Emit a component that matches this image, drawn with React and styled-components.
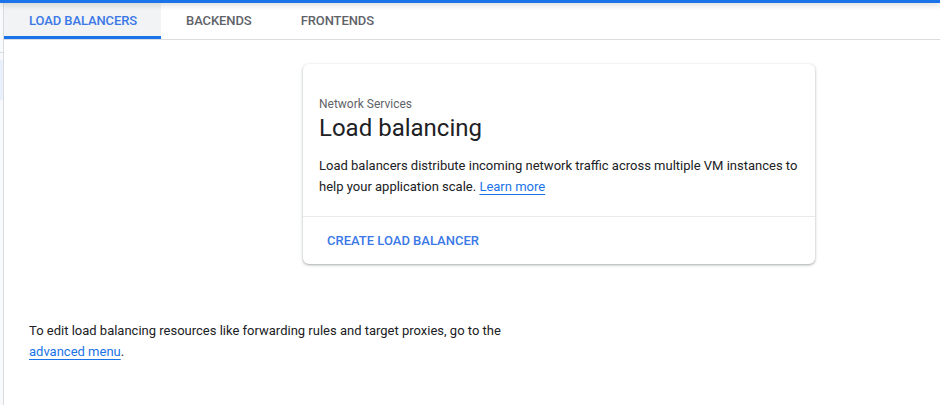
import React from 'react'
import styled, { createGlobalStyle } from 'styled-components'

const Global = createGlobalStyle`
  html, body {
    margin: 0;
    padding: 0;
    background: #fff;
    font-family: Roboto, "Liberation Sans", Arial, sans-serif;
    color: #202124;
  }
`

const Page = styled.div`
  display: flex;
  flex-direction: column;
  width: 940px;
  height: 405px;
  overflow: hidden;
`

const TopBar = styled.div`
  height: 3px;
  background: #1a73e8;
  box-shadow: 0 1px 6px rgba(60, 64, 67, 0.35);
  position: relative;
  z-index: 2;
  flex-shrink: 0;
`

const Body = styled.div`
  display: flex;
  flex: 1;
`

const SideSliver = styled.div`
  width: 3px;
  border-right: 1px solid #dadce0;
  background: #f8f9fa;
  display: flex;
  flex-direction: column;
  flex-shrink: 0;
`

const SliverLine = styled.div`
  margin-top: 49px;
  height: 1px;
  background: #dadce0;
`

const SliverActive = styled.div`
  margin-top: 7px;
  height: 40px;
  background: #e8f0fe;
`

const Main = styled.div`
  flex: 1;
  display: flex;
  flex-direction: column;
`

const Tabs = styled.div`
  display: flex;
  height: 36px;
  border-bottom: 1px solid #dadce0;
`

const Tab = styled.div`
  display: flex;
  align-items: center;
  padding: 2px 24px 0 25px;
  font-size: 13px;
  font-weight: 500;
  letter-spacing: -0.1px;
  text-transform: uppercase;
  color: ${p => (p.$active ? '#3b78e7' : '#5f6368')};
  background: ${p => (p.$active ? '#f1f3f4' : 'transparent')};
  border-bottom: 3px solid ${p => (p.$active ? '#1a73e8' : 'transparent')};
`

const Content = styled.div`
  display: flex;
  flex-direction: column;
  padding: 24px 0 0 25px;
`

const CardRow = styled.div`
  display: flex;
  padding-left: 274px;
`

const Card = styled.div`
  width: 512px;
  border-radius: 6px;
  background: #fff;
  box-shadow: 0 1px 2px rgba(60, 64, 67, 0.3), 0 1px 3px 1px rgba(60, 64, 67, 0.12);
`

const CardBody = styled.div`
  padding: 32px 16px 19px 16px;
  border-bottom: 1px solid #e8eaed;
`

const Eyebrow = styled.div`
  font-size: 12px;
  line-height: 16px;
  color: #5f6368;
`

const Title = styled.h1`
  margin: 0;
  font-size: 24px;
  font-weight: 400;
  line-height: 32px;
  color: #202124;
`

const Desc = styled.p`
  margin: 11px 0 0 0;
  font-size: 13px;
  line-height: 21px;
  color: #202124;
`

const Link = styled.a`
  color: #1a73e8;
  text-decoration: underline;
  text-underline-offset: 3px;
`

const CardActions = styled.div`
  display: flex;
  align-items: center;
  height: 47px;
  padding: 0 16px;
`

const TextButton = styled.button`
  border: none;
  background: none;
  padding: 0 8px;
  height: 36px;
  font-family: inherit;
  font-size: 13px;
  font-weight: 500;
  letter-spacing: 0;
  color: #3b78e7;
  text-transform: uppercase;
  cursor: pointer;
`

const Note = styled.p`
  margin: 56px 0 0 0;
  font-size: 13px;
  line-height: 21px;
  color: #202124;
  max-width: 480px;
`

export default function App() {
  return (
    <Page>
      <Global />
      <TopBar />
      <Body>
        <SideSliver>
          <SliverLine />
          <SliverActive />
        </SideSliver>
        <Main>
          <Tabs>
            <Tab $active>Load balancers</Tab>
            <Tab>Backends</Tab>
            <Tab>Frontends</Tab>
          </Tabs>
          <Content>
            <CardRow>
              <Card>
                <CardBody>
                  <Eyebrow>Network Services</Eyebrow>
                  <Title>Load balancing</Title>
                  <Desc>
                    Load balancers distribute incoming network traffic across multiple VM instances to
                    help your application scale. <Link href="#">Learn more</Link>
                  </Desc>
                </CardBody>
                <CardActions>
                  <TextButton>Create load balancer</TextButton>
                </CardActions>
              </Card>
            </CardRow>
            <Note>
              To edit load balancing resources like forwarding rules and target proxies, go to the{' '}
              <Link href="#">advanced menu</Link>.
            </Note>
          </Content>
        </Main>
      </Body>
    </Page>
  )
}
